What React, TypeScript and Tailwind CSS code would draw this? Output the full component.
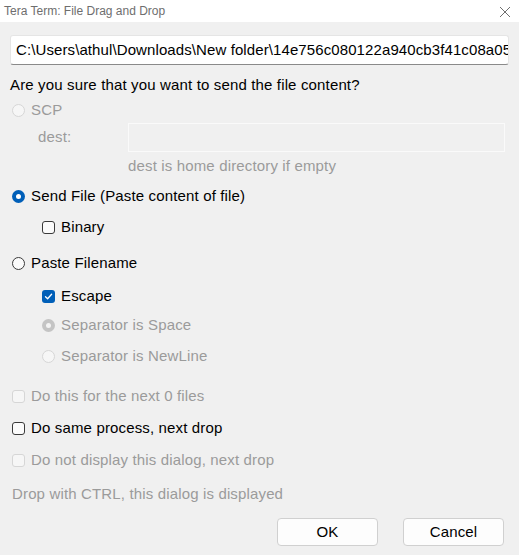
import React from 'react'

const font = { fontFamily: '"Liberation Sans", Arial, sans-serif' }

function Radio({ checked, disabled }: { checked?: boolean; disabled?: boolean }) {
  if (checked && !disabled) {
    return (
      <span className="w-[13px] h-[13px] rounded-full bg-[#005fb8] flex items-center justify-center shrink-0">
        <span className="w-[5px] h-[5px] rounded-full bg-white" />
      </span>
    )
  }
  if (checked && disabled) {
    return (
      <span className="w-[13px] h-[13px] rounded-full bg-[#c4c4c4] flex items-center justify-center shrink-0">
        <span className="w-[5px] h-[5px] rounded-full bg-[#f3f3f3]" />
      </span>
    )
  }
  return (
    <span
      className={`w-[13px] h-[13px] rounded-full border shrink-0 ${
        disabled ? 'border-[#d6d6d6] bg-[#f6f6f6]' : 'border-[#3a3a3a] bg-[#fbfbfb]'
      }`}
    />
  )
}

function Check({ checked, disabled }: { checked?: boolean; disabled?: boolean }) {
  if (checked) {
    return (
      <span className="w-[13px] h-[13px] rounded-[3px] bg-[#005fb8] flex items-center justify-center shrink-0">
        <svg width="9" height="9" viewBox="0 0 9 9" fill="none">
          <path d="M1.5 4.8 L3.6 6.8 L7.6 2.3" stroke="white" strokeWidth="1.3" strokeLinecap="round" strokeLinejoin="round" />
        </svg>
      </span>
    )
  }
  return (
    <span
      className={`w-[13px] h-[13px] rounded-[3px] border shrink-0 ${
        disabled ? 'border-[#d6d6d6] bg-[#f6f6f6]' : 'border-[#3a3a3a] bg-[#fbfbfb]'
      }`}
    />
  )
}

function Row({
  mt,
  indent,
  children,
}: {
  mt: string
  indent?: boolean
  children: React.ReactNode
}) {
  return (
    <div className={`h-[20px] flex items-center gap-[6px] ${mt} ${indent ? 'pl-[42px]' : 'pl-[12px]'}`}>
      {children}
    </div>
  )
}

export default function App() {
  return (
    <div className="w-[519px] h-[555px] bg-[#f0f0f0] text-[15px] tracking-[0.15px] text-black flex flex-col" style={font}>
      {/* Title bar */}
      <div className="h-[22px] bg-white flex items-center justify-between pl-[4px] pr-[8px] tracking-normal">
        <span className="text-[12px] text-[#6e6e6e]">Tera Term: File Drag and Drop</span>
        <svg width="12" height="12" viewBox="0 0 12 12" className="mt-[1px]">
          <path d="M1 1 L11 11 M11 1 L1 11" stroke="#6e6e6e" strokeWidth="1" />
        </svg>
      </div>

      {/* File path */}
      <div className="mt-[13px] mx-[10px] h-[30px] bg-white border border-[#e5e5e5] border-b-[#8a8a8a] rounded-[3px] flex items-center pl-[5px] overflow-hidden whitespace-nowrap tracking-[0.1px]">
        C:\Users\athul\Downloads\New folder\14e756c080122a940cb3f41c08a05
      </div>

      <div className="h-[20px] mt-[10px] pl-[10px] flex items-center">
        Are you sure that you want to send the file content?
      </div>

      <Row mt="mt-[5px]">
        <Radio disabled />
        <span className="text-[#9b9b9b]">SCP</span>
      </Row>

      <div className="mt-[3px] h-[29px] flex items-center">
        <span className="w-[128px] pl-[38px] text-[#9b9b9b]">dest:</span>
        <div className="flex-1 mr-[14px] h-full border border-[#fafafa] bg-[#f0f0f0]" />
      </div>

      <div className="mt-[4px] h-[20px] pl-[128px] flex items-center text-[#9b9b9b]">
        dest is home directory if empty
      </div>

      <Row mt="mt-[10px]">
        <Radio checked />
        <span>Send File (Paste content of file)</span>
      </Row>

      <Row mt="mt-[11px]" indent>
        <Check />
        <span>Binary</span>
      </Row>

      <Row mt="mt-[16px]">
        <Radio />
        <span>Paste Filename</span>
      </Row>

      <Row mt="mt-[13px]" indent>
        <Check checked />
        <span>Escape</span>
      </Row>

      <Row mt="mt-[9px]" indent>
        <Radio checked disabled />
        <span className="text-[#9b9b9b]">Separator is Space</span>
      </Row>

      <Row mt="mt-[11px]" indent>
        <Radio disabled />
        <span className="text-[#9b9b9b]">Separator is NewLine</span>
      </Row>

      <Row mt="mt-[20px]">
        <Check disabled />
        <span className="text-[#9b9b9b]">Do this for the next 0 files</span>
      </Row>

      <Row mt="mt-[12px]">
        <Check />
        <span>Do same process, next drop</span>
      </Row>

      <Row mt="mt-[12px]">
        <Check disabled />
        <span className="text-[#9b9b9b]">Do not display this dialog, next drop</span>
      </Row>

      <div className="mt-[14px] h-[20px] pl-[12px] flex items-center text-[#9b9b9b]">
        Drop with CTRL, this dialog is displayed
      </div>

      <div className="mt-[14px] flex justify-end gap-[25px] pr-[15px]">
        <button className="w-[101px] h-[28px] bg-[#fdfdfd] border border-[#d0d0d0] rounded-[4px] text-[15px]">
          OK
        </button>
        <button className="w-[101px] h-[28px] bg-[#fdfdfd] border border-[#d0d0d0] rounded-[4px] text-[15px]">
          Cancel
        </button>
      </div>
    </div>
  )
}
